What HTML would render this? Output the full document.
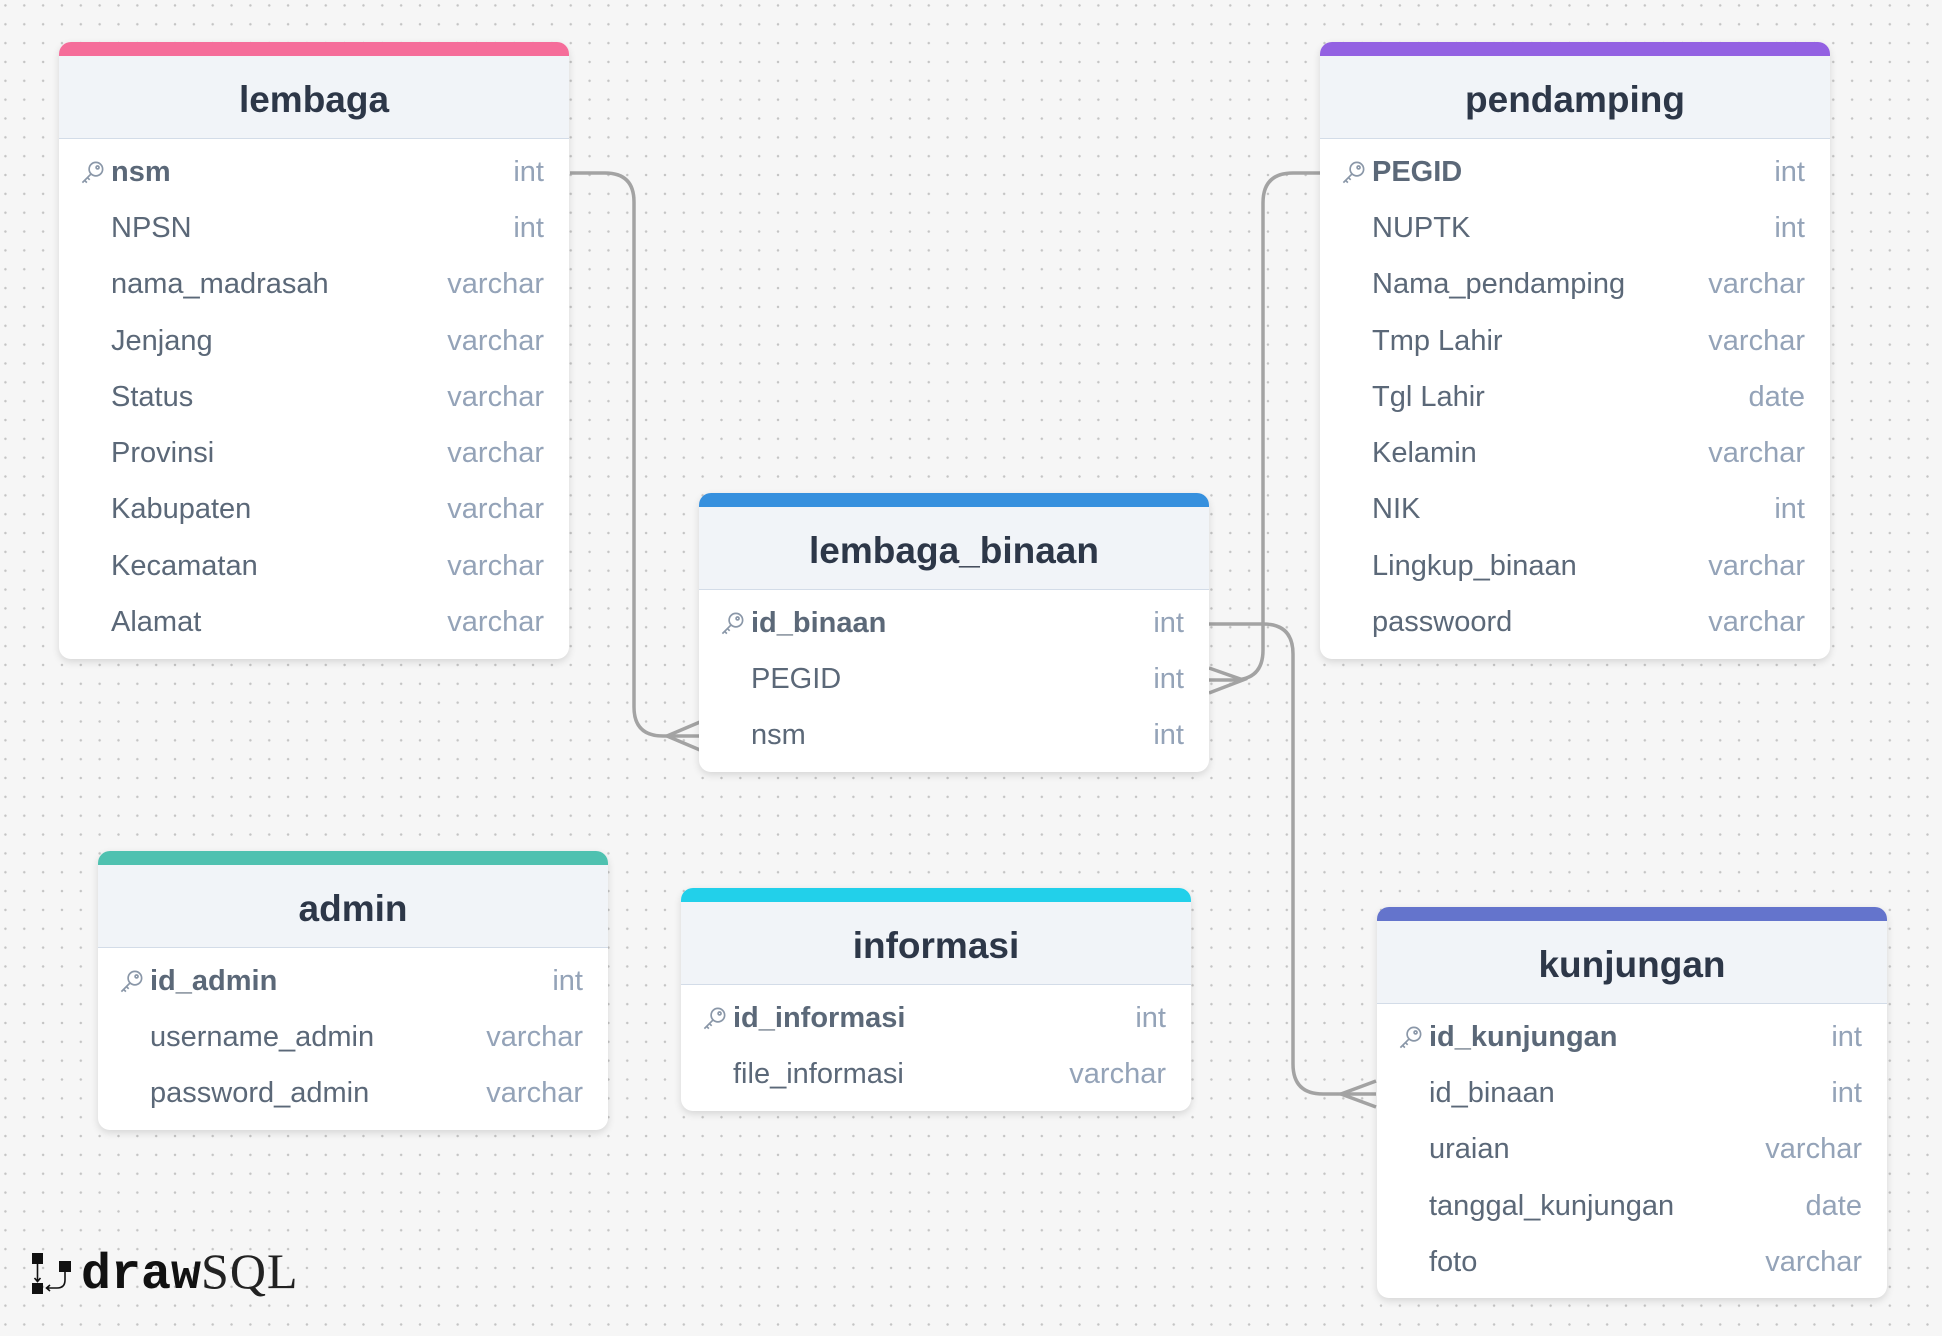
<!DOCTYPE html>
<html><head><meta charset="utf-8"><style>
*{box-sizing:border-box;margin:0;padding:0}
body{width:1942px;height:1336px;overflow:hidden;background-color:#f6f6f6;background-image:radial-gradient(circle,#c4c4c4 1.1px,transparent 1.4px);background-size:18.85px 18.85px;background-position:-4px -4px;font-family:"Liberation Sans",sans-serif;position:relative}
.t{position:absolute;width:510px;background:#fff;border-radius:12px;box-shadow:0 3px 8px rgba(0,0,0,.13);overflow:hidden}
.bar{height:14px}
.h{height:83px;background:#f1f4f8;border-bottom:1.5px solid #d3dce8;text-align:center;line-height:88px;font-size:37px;font-weight:bold;color:#2d3748}
.rows{padding:5px 0 8px}
.r{height:56.3px;display:flex;align-items:center;padding:0 25px 0 52px;font-size:29px;color:#5b6878;position:relative}
.r span{flex:1}
.r b{font-weight:bold}
.r i{font-style:normal;color:#94a3b8}
.k{position:absolute;left:20px;top:15px}
svg.l{position:absolute;left:0;top:0}
.logo{position:absolute;left:30px;top:1250px}
</style></head><body>
<svg class="l" width="1942" height="1336" fill="none" stroke="#a3a3a3" stroke-width="3.5">
<path d="M570 173 H605 Q634 173 634 202 V707 Q634 736 663 736 H700"/>
<path d="M700 722 L667 736 L700 750"/>
<path d="M1320 173 H1293 Q1263 173 1263 203 V650 Q1263 680 1233 680 H1209"/>
<path d="M1209 668 L1243 680 L1209 693"/>
<path d="M1209 624 H1263 Q1293 624 1293 654 V1064 Q1293 1094 1323 1094 H1376"/>
<path d="M1376 1081 L1341 1094 L1376 1107"/>
</svg>

<div class="t" style="left:59px;top:42px"><div class="bar" style="background:#f56d9a"></div><div class="h">lembaga</div><div class="rows">
<div class="r"><svg class="k" width="27" height="27" viewBox="0 0 24 24" fill="none" stroke="#8a97a8" stroke-width="1.5"><circle cx="15" cy="9" r="6"/><circle cx="16.5" cy="7.5" r="1.3"/><path d="M10.5 13.5 L3 21 M5 19 L7 21 M7.5 16.5 L9.5 18.5"/></svg><span><b>nsm</b></span><i>int</i></div>
<div class="r"><span>NPSN</span><i>int</i></div>
<div class="r"><span>nama_madrasah</span><i>varchar</i></div>
<div class="r"><span>Jenjang</span><i>varchar</i></div>
<div class="r"><span>Status</span><i>varchar</i></div>
<div class="r"><span>Provinsi</span><i>varchar</i></div>
<div class="r"><span>Kabupaten</span><i>varchar</i></div>
<div class="r"><span>Kecamatan</span><i>varchar</i></div>
<div class="r"><span>Alamat</span><i>varchar</i></div>
</div></div>

<div class="t" style="left:1320px;top:42px"><div class="bar" style="background:#9361e2"></div><div class="h">pendamping</div><div class="rows">
<div class="r"><svg class="k" width="27" height="27" viewBox="0 0 24 24" fill="none" stroke="#8a97a8" stroke-width="1.5"><circle cx="15" cy="9" r="6"/><circle cx="16.5" cy="7.5" r="1.3"/><path d="M10.5 13.5 L3 21 M5 19 L7 21 M7.5 16.5 L9.5 18.5"/></svg><span><b>PEGID</b></span><i>int</i></div>
<div class="r"><span>NUPTK</span><i>int</i></div>
<div class="r"><span>Nama_pendamping</span><i>varchar</i></div>
<div class="r"><span>Tmp Lahir</span><i>varchar</i></div>
<div class="r"><span>Tgl Lahir</span><i>date</i></div>
<div class="r"><span>Kelamin</span><i>varchar</i></div>
<div class="r"><span>NIK</span><i>int</i></div>
<div class="r"><span>Lingkup_binaan</span><i>varchar</i></div>
<div class="r"><span>passwoord</span><i>varchar</i></div>
</div></div>

<div class="t" style="left:699px;top:493px"><div class="bar" style="background:#3690de"></div><div class="h">lembaga_binaan</div><div class="rows">
<div class="r"><svg class="k" width="27" height="27" viewBox="0 0 24 24" fill="none" stroke="#8a97a8" stroke-width="1.5"><circle cx="15" cy="9" r="6"/><circle cx="16.5" cy="7.5" r="1.3"/><path d="M10.5 13.5 L3 21 M5 19 L7 21 M7.5 16.5 L9.5 18.5"/></svg><span><b>id_binaan</b></span><i>int</i></div>
<div class="r"><span>PEGID</span><i>int</i></div>
<div class="r"><span>nsm</span><i>int</i></div>
</div></div>

<div class="t" style="left:98px;top:851px"><div class="bar" style="background:#4fc1b0"></div><div class="h">admin</div><div class="rows">
<div class="r"><svg class="k" width="27" height="27" viewBox="0 0 24 24" fill="none" stroke="#8a97a8" stroke-width="1.5"><circle cx="15" cy="9" r="6"/><circle cx="16.5" cy="7.5" r="1.3"/><path d="M10.5 13.5 L3 21 M5 19 L7 21 M7.5 16.5 L9.5 18.5"/></svg><span><b>id_admin</b></span><i>int</i></div>
<div class="r"><span>username_admin</span><i>varchar</i></div>
<div class="r"><span>password_admin</span><i>varchar</i></div>
</div></div>

<div class="t" style="left:681px;top:888px"><div class="bar" style="background:#22d0ea"></div><div class="h">informasi</div><div class="rows">
<div class="r"><svg class="k" width="27" height="27" viewBox="0 0 24 24" fill="none" stroke="#8a97a8" stroke-width="1.5"><circle cx="15" cy="9" r="6"/><circle cx="16.5" cy="7.5" r="1.3"/><path d="M10.5 13.5 L3 21 M5 19 L7 21 M7.5 16.5 L9.5 18.5"/></svg><span><b>id_informasi</b></span><i>int</i></div>
<div class="r"><span>file_informasi</span><i>varchar</i></div>
</div></div>

<div class="t" style="left:1377px;top:907px"><div class="bar" style="background:#6474cc"></div><div class="h">kunjungan</div><div class="rows">
<div class="r"><svg class="k" width="27" height="27" viewBox="0 0 24 24" fill="none" stroke="#8a97a8" stroke-width="1.5"><circle cx="15" cy="9" r="6"/><circle cx="16.5" cy="7.5" r="1.3"/><path d="M10.5 13.5 L3 21 M5 19 L7 21 M7.5 16.5 L9.5 18.5"/></svg><span><b>id_kunjungan</b></span><i>int</i></div>
<div class="r"><span>id_binaan</span><i>int</i></div>
<div class="r"><span>uraian</span><i>varchar</i></div>
<div class="r"><span>tanggal_kunjungan</span><i>date</i></div>
<div class="r"><span>foto</span><i>varchar</i></div>
</div></div>

<div class="logo">
<svg width="42" height="46" viewBox="0 0 42 46" style="position:absolute;left:2px;top:3px"><rect x="0" y="0" width="11" height="11" fill="#111"/><rect x="0" y="30" width="11" height="11" fill="#111"/><rect x="27" y="8" width="12" height="11" fill="#111"/><path d="M5.5 11 V28 M2.5 25 L5.5 28.5 L8.5 25" stroke="#111" stroke-width="1.6" fill="none"/><path d="M33 19 V27 Q33 35 25 35 H15 M18 32 L14.5 35 L18 38" stroke="#111" stroke-width="1.6" fill="none"/></svg>
<div style="position:absolute;left:51px;top:-8px;font-family:'Liberation Mono',monospace;font-size:50px;line-height:58px;white-space:nowrap;color:#111"><b>draw</b><span style="font-family:'Liberation Serif',serif;font-weight:normal;color:#222;letter-spacing:1px">SQL</span></div>
</div>
</body></html>
